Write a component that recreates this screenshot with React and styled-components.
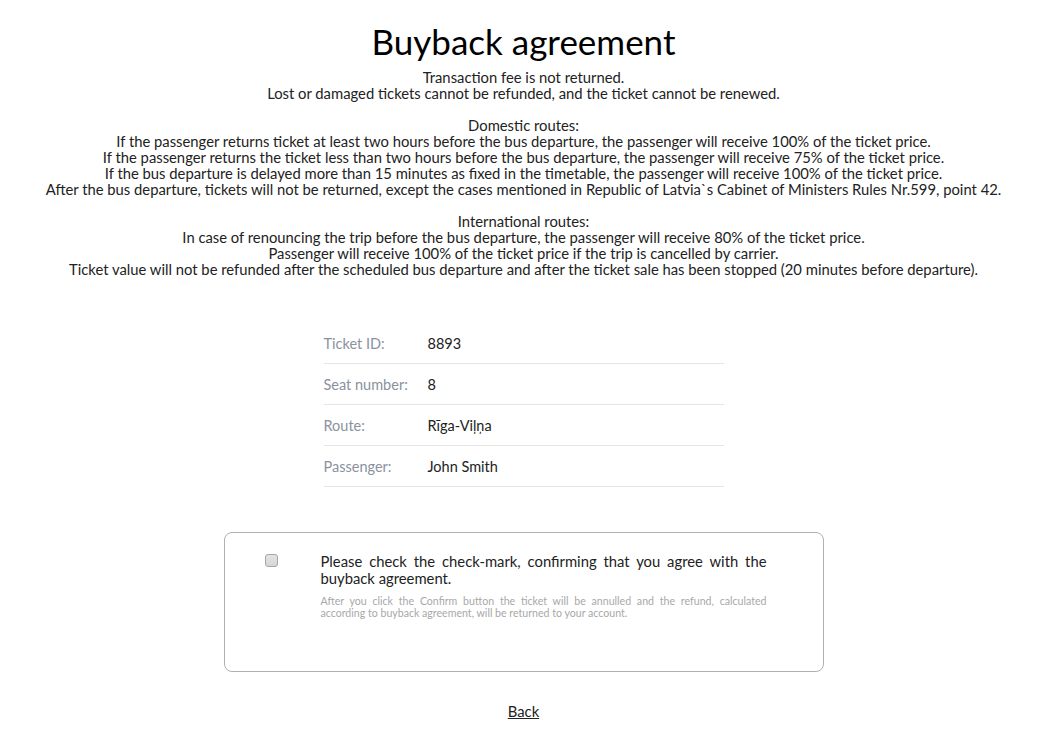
import React from "react";
import styled, { createGlobalStyle } from "styled-components";

const Global = createGlobalStyle`
  html, body { margin: 0; padding: 0; background: #fff; }
  body { font-family: Lato, "Open Sans", sans-serif; color: #222; }
`;

const Page = styled.div`
  display: flex;
  flex-direction: column;
  align-items: center;
  padding: 21px 0 20px 6px;
`;

const Title = styled.h1`
  margin: 0;
  font-size: 35px;
  font-weight: 400;
  line-height: 40px;
  color: #000;
`;

const Rules = styled.div`
  margin-top: 8px;
  text-align: center;
  font-size: 14.8px;
  line-height: 16px;
  color: #222;
`;

const Para = styled.p`
  margin: 0 0 16px;
  &:last-child { margin-bottom: 0; }
`;

const Table = styled.div`
  margin-top: 46px;
  width: 400px;
  display: flex;
  flex-direction: column;
`;

const Row = styled.div`
  display: grid;
  grid-template-columns: 104px 1fr;
  height: 40px;
  align-items: center;
  border-bottom: 1px solid #e6e6e6;
  font-size: 14.5px;
`;

const Label = styled.span`
  color: #8a929e;
`;

const Value = styled.span`
  color: #222;
`;

const Box = styled.div`
  margin-top: 45px;
  width: 598px;
  border: 1px solid #b0b0b0;
  border-radius: 8px;
  display: grid;
  grid-template-columns: 96px 446px;
  align-content: start;
  padding-top: 20px;
  height: 118px;
`;

const CheckCell = styled.div`
  display: flex;
  justify-content: flex-end;
  padding-right: 43px;
`;

const Check = styled.span`
  display: block;
  width: 11px;
  height: 11px;
  margin-top: 1px;
  border: 1px solid #a6a6a6;
  border-radius: 3px;
  background: linear-gradient(#e4e4e4, #d6d6d6);
`;

const Texts = styled.div`
  display: flex;
  flex-direction: column;
`;

const Agree = styled.div`
  font-size: 14.8px;
  line-height: 17px;
  color: #222;
  text-align: justify;
`;

const Note = styled.div`
  margin-top: 8px;
  font-size: 10.6px;
  line-height: 12px;
  color: #a8a8a8;
  text-align: justify;
`;

const BackLink = styled.a`
  margin-top: 30px;
  font-size: 14.8px;
  color: #222;
  text-decoration: underline;
`;

const rows = [
  ["Ticket ID:", "8893"],
  ["Seat number:", "8"],
  ["Route:", "Rīga-Viļņa"],
  ["Passenger:", "John Smith"],
];

export default function App() {
  return (
    <>
      <Global />
      <Page>
        <Title>Buyback agreement</Title>
        <Rules>
          <Para>
            Transaction fee is not returned.<br />
            Lost or damaged tickets cannot be refunded, and the ticket cannot be renewed.
          </Para>
          <Para>
            Domestic routes:<br />
            If the passenger returns ticket at least two hours before the bus departure, the passenger will receive 100% of the ticket price.<br />
            If the passenger returns the ticket less than two hours before the bus departure, the passenger will receive 75% of the ticket price.<br />
            If the bus departure is delayed more than 15 minutes as fixed in the timetable, the passenger will receive 100% of the ticket price.<br />
            After the bus departure, tickets will not be returned, except the cases mentioned in Republic of Latvia`s Cabinet of Ministers Rules Nr.599, point 42.
          </Para>
          <Para>
            International routes:<br />
            In case of renouncing the trip before the bus departure, the passenger will receive 80% of the ticket price.<br />
            Passenger will receive 100% of the ticket price if the trip is cancelled by carrier.<br />
            Ticket value will not be refunded after the scheduled bus departure and after the ticket sale has been stopped (20 minutes before departure).
          </Para>
        </Rules>
        <Table>
          {rows.map(([l, v]) => (
            <Row key={l}>
              <Label>{l}</Label>
              <Value>{v}</Value>
            </Row>
          ))}
        </Table>
        <Box>
          <CheckCell>
            <Check />
          </CheckCell>
          <Texts>
            <Agree>Please check the check-mark, confirming that you agree with the buyback agreement.</Agree>
            <Note>After you click the Confirm button the ticket will be annulled and the refund, calculated according to buyback agreement, will be returned to your account.</Note>
          </Texts>
        </Box>
        <BackLink href="#">Back</BackLink>
      </Page>
    </>
  );
}
